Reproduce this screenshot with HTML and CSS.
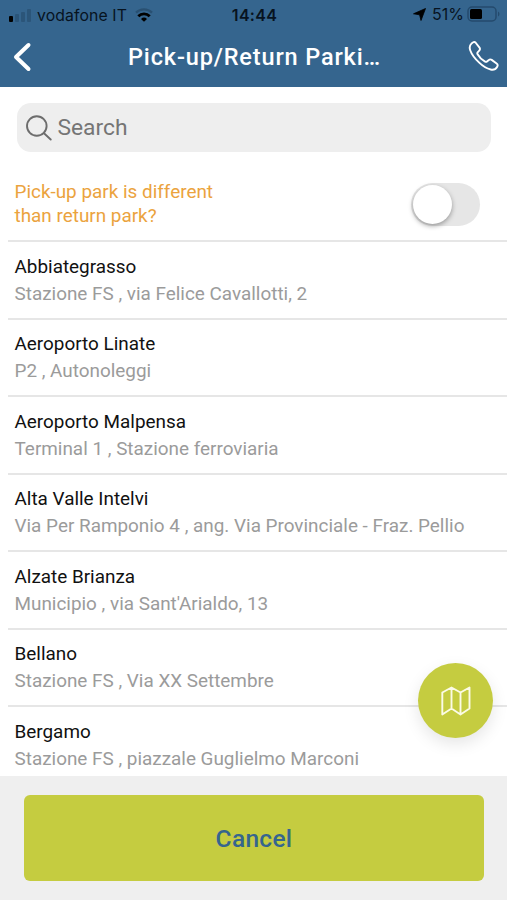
FILE: index.html
```html
<!DOCTYPE html>
<html lang="en">
<head>
<meta charset="utf-8">
<title>Pick-up/Return Parking</title>
<link rel="stylesheet" href="styles.css">
</head>
<body>
<div class="app">
  <header class="header">
    <div class="status">
      <div class="status-left">
        <span class="signal"><i class="on"></i><i></i><i></i><i></i></span>
        <span class="carrier">vodafone IT</span>
        <svg class="wifi" width="18" height="14" viewBox="0 0 18 14"><path d="M1 4.600a11.500 11.500 0 0 1 16 0" fill="none" stroke="#07131f" stroke-width="2.300" opacity=".25"/><path d="M3.300 8.200a8 8 0 0 1 11.400 0" fill="none" stroke="#000" stroke-width="2.800"/><path d="M9 13.800 6 11a4.300 4.300 0 0 1 6 0z" fill="#000"/></svg>
      </div>
      <span class="clock">14:44</span>
      <div class="status-right">
        <svg width="13" height="13" viewBox="0 0 13 13"><path d="M12.500.500 8 12.500 6.600 6.800.500 5.800z" fill="#000" stroke="#000" stroke-width=".8" stroke-linejoin="round"/></svg>
        <span class="percent">51%</span>
        <svg class="battery" width="33" height="16" viewBox="0 0 33 16"><rect x="1" y="1" width="28" height="14" rx="4" fill="none" stroke="#244a6d" stroke-width="1.500"/><rect x="3" y="3" width="12" height="10" rx="1.500" fill="#000"/><path d="M31 5.500v5c2-1 2-4 0-5" fill="#244a6d"/></svg>
      </div>
    </div>
    <nav class="nav">
      <svg class="back" width="20" height="30" viewBox="0 0 20 30"><path d="M16.500 3 4 15l12.500 12" fill="none" stroke="#fff" stroke-width="4" stroke-linecap="round" stroke-linejoin="round"/></svg>
      <h1 class="title">Pick-up/Return Parki…</h1>
      <svg class="phone" width="32" height="32" viewBox="0 0 32 32"><path d="M3.400 3.600C4.800 2 6.400 1.400 7.500 2.500L11.500 7.600c.7 1.100.5 2.200-.3 3l-1.600 1.700c-.5.6-.4 1.200 0 1.900 1.700 3.100 4.300 5.600 7.500 7.400.7.400 1.300.4 1.900-.1l1.800-1.500c.9-.8 1.900-.8 2.900-.1l4.900 3.500c1.300.9 1.400 2.200.5 3.500-1.400 2.300-3.400 3.300-6.400 2.600-4-1-7.900-3.400-11.500-6.900C6.700 18.400 3.600 14.200 2.200 10.200 1.300 7.600 1.700 5.300 3.400 3.600z" fill="none" stroke="#fff" stroke-width="1.900" stroke-linejoin="round"/></svg>
    </nav>
  </header>
  <main class="content">
    <div class="search">
      <svg width="26" height="26" viewBox="0 0 26 26"><g fill="none" stroke="#6d6d6d" stroke-width="1.900" stroke-linecap="round"><circle cx="10.800" cy="11" r="9.800"/><path d="m18 18.300 6.700 6.200"/></g></svg>
      <span>Search</span>
    </div>
    <div class="different">
      <p>Pick-up park is different<br>than return park?</p>
      <span class="toggle"><span class="knob"></span></span>
    </div>
    <ul class="list">
      <li><b>Abbiategrasso</b><span>Stazione FS , via Felice Cavallotti, 2</span></li>
      <li><b>Aeroporto Linate</b><span>P2 , Autonoleggi</span></li>
      <li><b>Aeroporto Malpensa</b><span>Terminal 1 , Stazione ferroviaria</span></li>
      <li><b>Alta Valle Intelvi</b><span>Via Per Ramponio 4 , ang. Via Provinciale - Fraz. Pellio</span></li>
      <li><b>Alzate Brianza</b><span>Municipio , via Sant'Arialdo, 13</span></li>
      <li><b>Bellano</b><span>Stazione FS , Via XX Settembre</span></li>
      <li><b>Bergamo</b><span>Stazione FS , piazzale Guglielmo Marconi</span></li>
    </ul>
    <div class="fab">
      <svg width="30" height="30" viewBox="0 0 30 30"><path d="M1.300 6.500 10.500 1.500 19.500 6.500 28.500 1.500V22.500L19.500 28.500 10.500 22.500 1.300 28.500zM10.500 1.500v21M19.500 6.500v22" fill="none" stroke="#fbfbe6" stroke-width="1.900" stroke-linejoin="round"/></svg>
    </div>
  </main>
  <footer class="footer"><button class="cancel">Cancel</button></footer>
</div>
</body>
</html>
```
FILE: styles.css
```css
* { box-sizing: border-box; }
body { margin: 0; font-family: Roboto, sans-serif; background: #fff; }
.app { width: 507px; height: 900px; display: flex; flex-direction: column; overflow: hidden; }
.header { height: 87px; flex: none; background: #35658e; }
.status { height: 30px; display: grid; grid-template-columns: 1fr auto 1fr; align-items: center; padding: 0 7px 0 9px; color: #07131f; font-family: Inter, sans-serif; font-size: 16px; }
.status-left, .status-right { display: flex; align-items: center; }
.status-right { justify-content: flex-end; position: relative; top: -1px; }
.signal { display: flex; align-items: flex-end; gap: 2px; height: 13px; margin-right: 6px; }
.signal i { width: 4px; height: 9px; border-radius: 1px; background: #2b5579; }
.signal i.on { height: 6px; background: #000; }
.signal i:nth-child(2) { height: 8px; }
.signal i:nth-child(3) { height: 10px; }
.signal i:nth-child(4) { height: 13px; }
.carrier { font-size: 15.8px; letter-spacing: 0.1px; }
.wifi { margin-left: 8px; }
.clock { font-weight: 600; font-size: 16px; letter-spacing: 0.3px; }
.percent { margin: 0 3px 0 6px; font-size: 16px; }
.nav { height: 54px; display: grid; grid-template-columns: 36px 1fr 36px; align-items: center; padding: 0 6px 0 12px; }
.title { margin: 0 4px 0 0; font-size: 23.5px; font-weight: 500; letter-spacing: 0.85px; color: #fff; text-align: center; white-space: nowrap; }
.phone { margin: -3px 0 0 3px; }
.content { flex: 1; min-height: 0; position: relative; overflow: hidden; }
.search { display: flex; align-items: center; gap: 6px; height: 49px; margin: 16px 16px 0 16.500px; padding-left: 9px; border-radius: 14px; background: #eee; color: #757575; font-size: 22.800px; }
.different { height: 88px; display: flex; justify-content: space-between; padding: 28px 27px 0 14.500px; }
.different p { margin: 0; font-size: 18.900px; line-height: 24px; color: #eba33e; }
.toggle { width: 69px; height: 43px; margin-top: 3px; padding: 2px; border-radius: 22px; background: #e6e6e6; }
.knob { display: block; width: 39px; height: 39px; border-radius: 50%; background: #fff; box-shadow: 0 2px 5px rgba(0, 0, 0, 0.35); }
.list { list-style: none; margin: 0 0 0 8px; padding: 0; }
.list li { height: 77.550px; padding: 10.500px 0 0 6.500px; border-top: 2px solid #e6e6e6; font-size: 18.900px; line-height: 27px; }
.list b, .list span { display: block; font-weight: 400; white-space: nowrap; }
.list b { color: #111; }
.list span { color: #9b9b9b; }
.fab { position: absolute; right: 14px; bottom: 38px; width: 75px; height: 75px; border-radius: 50%; display: flex; align-items: center; justify-content: center; background: #c5cc40; box-shadow: 0 6px 16px rgba(0, 0, 0, 0.1); }
.footer { flex: none; height: 124px; padding: 19px 23px 19px 24px; background: #efefef; }
.cancel { display: block; width: 100%; height: 86px; border: 0; border-radius: 6px; background: #c5cc40; color: #35658e; font: 500 24.500px Roboto, sans-serif; letter-spacing: 0.3px; }
```
